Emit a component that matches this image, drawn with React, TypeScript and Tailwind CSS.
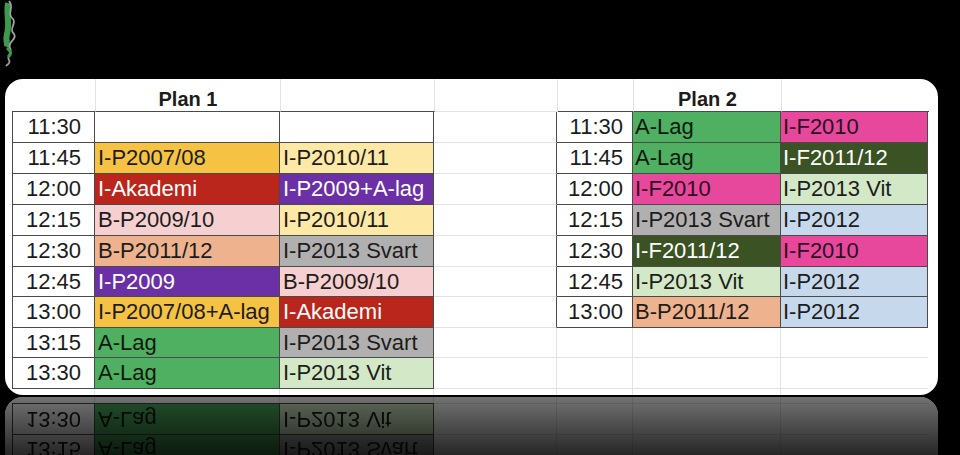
import React from 'react';

type Cell = { t: string; c: string };

const GOLD = 'bg-[#f5c244] text-[#1c1c1c]';
const LYEL = 'bg-[#fde8a6] text-[#1c1c1c]';
const RED = 'bg-[#bb261c] text-white';
const PURPLE = 'bg-[#6b2fa6] text-white';
const PINK = 'bg-[#f6d0d0] text-[#1c1c1c]';
const PEACH = 'bg-[#eeb38e] text-[#1c1c1c]';
const GRAY = 'bg-[#b1b0b0] text-[#1c1c1c]';
const GREEN = 'bg-[#4eb060] text-[#101810]';
const LGREEN = 'bg-[#d3e8c6] text-[#1c1c1c]';
const MAG = 'bg-[#e8489c] text-[#2a1020]';
const DGREEN = 'bg-[#3b5224] text-white';
const BLUE = 'bg-[#c6d9ec] text-[#1c1c1c]';
const EMPTY = 'bg-white';

const times1 = ['11:30', '11:45', '12:00', '12:15', '12:30', '12:45', '13:00', '13:15', '13:30'];
const times2 = ['11:30', '11:45', '12:00', '12:15', '12:30', '12:45', '13:00'];
const heights = ['h-[31px]', 'h-[31px]', 'h-[31px]', 'h-[31px]', 'h-[31px]', 'h-[30px]', 'h-[31px]', 'h-[30px]', 'h-[31px]'];

const plan1: Cell[][] = [
    [{ t: '', c: EMPTY }, { t: '', c: EMPTY }],
    [{ t: 'I-P2007/08', c: GOLD }, { t: 'I-P2010/11', c: LYEL }],
    [{ t: 'I-Akademi', c: RED }, { t: 'I-P2009+A-lag', c: PURPLE }],
    [{ t: 'B-P2009/10', c: PINK }, { t: 'I-P2010/11', c: LYEL }],
    [{ t: 'B-P2011/12', c: PEACH }, { t: 'I-P2013 Svart', c: GRAY }],
    [{ t: 'I-P2009', c: PURPLE }, { t: 'B-P2009/10', c: PINK }],
    [{ t: 'I-P2007/08+A-lag', c: GOLD }, { t: 'I-Akademi', c: RED }],
    [{ t: 'A-Lag', c: GREEN }, { t: 'I-P2013 Svart', c: GRAY }],
    [{ t: 'A-Lag', c: GREEN }, { t: 'I-P2013 Vit', c: LGREEN }],
];

const plan2: Cell[][] = [
    [{ t: 'A-Lag', c: GREEN }, { t: 'I-F2010', c: MAG }],
    [{ t: 'A-Lag', c: GREEN }, { t: 'I-F2011/12', c: DGREEN }],
    [{ t: 'I-F2010', c: MAG }, { t: 'I-P2013 Vit', c: LGREEN }],
    [{ t: 'I-P2013 Svart', c: GRAY }, { t: 'I-P2012', c: BLUE }],
    [{ t: 'I-F2011/12', c: DGREEN }, { t: 'I-F2010', c: MAG }],
    [{ t: 'I-P2013 Vit', c: LGREEN }, { t: 'I-P2012', c: BLUE }],
    [{ t: 'B-P2011/12', c: PEACH }, { t: 'I-P2012', c: BLUE }],
];

const DARK = 'border-[#4a4a4a]';
const FAINT = 'border-[#e2e2e2]';
const text = 'text-[22px] leading-[30px] whitespace-nowrap overflow-hidden';

const Row: React.FC<{ i: number }> = ({ i }) => {
    const p1 = plan1[i];
    const p2 = plan2[i];
    return (
        <div className={`flex ${heights[i]}`}>
            <div className="w-[7px] shrink-0" />
            <div className={`w-[83px] shrink-0 border-l border-r border-b ${DARK} bg-white text-[#1c1c1c] text-right pr-[13px] ${text}`}>
                {times1[i]}
            </div>
            <div className={`w-[185px] shrink-0 border-r border-b ${DARK} pl-[3px] ${p1[0].c} ${text}`}>{p1[0].t}</div>
            <div className={`w-[154px] shrink-0 border-r border-b ${DARK} pl-[3px] ${p1[1].c} ${text}`}>{p1[1].t}</div>
            <div className={`w-[123px] shrink-0 border-r border-b ${FAINT} ${p2 ? '!border-r-[#4a4a4a]' : ''}`} />
            {p2 ? (
                <>
                    <div className={`w-[76px] shrink-0 border-r border-b ${DARK} bg-white text-[#1c1c1c] text-right pr-[9px] ${text}`}>
                        {times2[i]}
                    </div>
                    <div className={`w-[148px] shrink-0 border-r border-b ${DARK} pl-[2px] ${p2[0].c} ${text}`}>{p2[0].t}</div>
                    <div className={`w-[147px] shrink-0 border-r border-b ${DARK} pl-[2px] ${p2[1].c} ${text}`}>{p2[1].t}</div>
                </>
            ) : (
                <>
                    <div className={`w-[76px] shrink-0 border-r border-b ${FAINT}`} />
                    <div className={`w-[148px] shrink-0 border-r border-b ${FAINT}`} />
                    <div className={`w-[147px] shrink-0 border-b ${FAINT}`} />
                </>
            )}
        </div>
    );
};

const Stub: React.FC = () => (
    <div className="flex h-[6px]">
        <div className="w-[7px] shrink-0" />
        <div className={`w-[83px] shrink-0 border-r ${FAINT}`} />
        <div className={`w-[185px] shrink-0 border-r ${FAINT}`} />
        <div className={`w-[154px] shrink-0 border-r ${FAINT}`} />
        <div className={`w-[123px] shrink-0 border-r ${FAINT}`} />
        <div className={`w-[76px] shrink-0 border-r ${FAINT}`} />
        <div className={`w-[148px] shrink-0 border-r ${FAINT}`} />
    </div>
);

const Header: React.FC = () => (
    <div className="flex h-[33px] text-[#1c1c1c]">
        <div className="w-[7px] shrink-0" />
        <div className={`w-[84px] shrink-0 border-r border-b ${FAINT} !border-b-[#4a4a4a]`} />
        <div className={`w-[185px] shrink-0 border-r border-b ${FAINT} !border-b-[#4a4a4a] flex items-end justify-center text-[20px] leading-[23px] font-bold`}>
            Plan 1
        </div>
        <div className={`w-[154px] shrink-0 border-r border-b ${FAINT} !border-b-[#4a4a4a]`} />
        <div className={`w-[123px] shrink-0 border-r border-b ${FAINT}`} />
        <div className={`w-[76px] shrink-0 border-r border-b ${FAINT} !border-b-[#4a4a4a]`} />
        <div className={`w-[148px] shrink-0 border-r border-b ${FAINT} !border-b-[#4a4a4a] flex items-end justify-center text-[20px] leading-[23px] font-bold`}>
            Plan 2
        </div>
        <div className={`w-[147px] shrink-0 border-b ${FAINT} !border-b-[#4a4a4a]`} />
    </div>
);

const Logo: React.FC = () => (
    <svg width="22" height="70" viewBox="0 0 22 70" className="ml-[1px]">
        <path d="M7 3 C 5 14, 9 24, 6 34 C 4 40, 7 44, 6 47" stroke="#3b9a4c" strokeWidth="6" fill="none" />
        <path
            d="M8 1 C 14 8, 5 13, 12 19 C 16 24, 7 28, 13 34 C 17 39, 6 42, 9 48 C 12 53, 5 56, 8 60 C 10 63, 6 65, 5 66"
            stroke="#a0a0a0"
            strokeWidth="1.8"
            fill="none"
        />
        <path d="M6 48 C 10 51, 11 54, 7 57" stroke="#3b9a4c" strokeWidth="3" fill="none" />
    </svg>
);

const App: React.FC = () => {
    return (
        <div className="w-[960px] h-[455px] bg-black overflow-hidden font-['Liberation_Sans',Arial,sans-serif]">
            <div className="h-[79px]">
                <Logo />
            </div>

            <div className="ml-[5px] w-[933px] h-[316px] bg-white rounded-[18px] overflow-hidden">
                <Header />
                {times1.map((_, i) => (
                    <Row key={i} i={i} />
                ))}
                <Stub />
            </div>

            {/* reflection */}
            <div className="relative mt-[2px] ml-[5px] w-[933px] h-[58px] bg-white rounded-t-[18px] overflow-hidden">
                <div className="-scale-y-100">
                    <Row i={7} />
                    <Row i={8} />
                    <Stub />
                </div>
                <div className="absolute inset-0 bg-linear-to-b from-black/55 to-black/85" />
            </div>
        </div>
    );
};

export default App;
